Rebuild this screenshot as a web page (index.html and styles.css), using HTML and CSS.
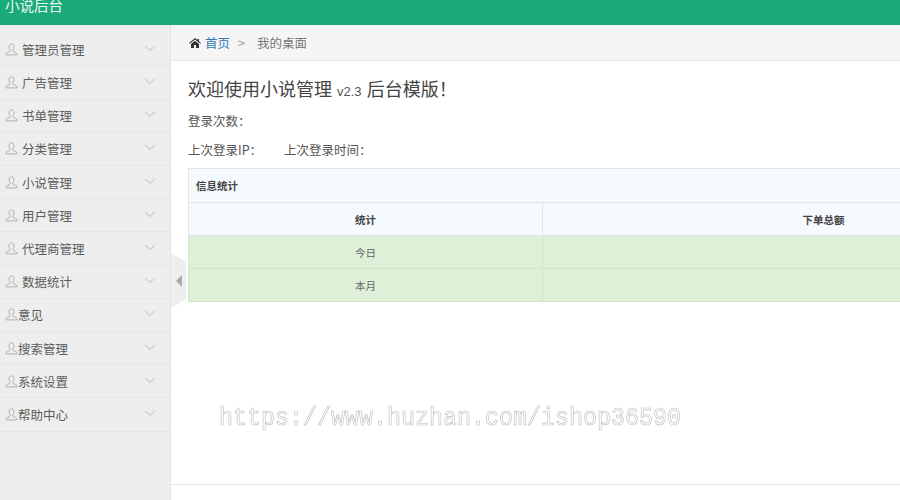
FILE: index.html
```html
<!DOCTYPE html>
<html lang="zh">
<head>
<meta charset="utf-8">
<title>小说后台</title>
<link rel="stylesheet" href="styles.css">
</head>
<body>
<svg class="defs" width="0" height="0">
  <symbol id="user" viewBox="0 0 13 13"><path d="M6.5 1C4.900 1 4 2.200 4 3.700c0 1.200.4 2.200 1 3 .3.400.3 1 .1 1.300-.3.500-1.300.9-2.300 1.300-1 .4-1.800.8-1.800 1.600v1h11v-1c0-.8-.8-1.200-1.800-1.600-1-.4-2-.8-2.300-1.300-.2-.3-.2-.9.100-1.300.6-.8 1-1.800 1-3C9 2.200 8.100 1 6.500 1z" fill="none" stroke="#b0b0b0" stroke-width="1"/></symbol>
  <symbol id="chev" viewBox="0 0 12 7"><path d="M1 1l5 4.500L11 1" fill="none" stroke="#cfcfcf" stroke-width="1.200"/></symbol>
</svg>
<header class="topbar"><span class="brand">小说后台</span></header>
<div class="layout">
  <nav class="sidebar">
    <ul class="menu">
      <li class="item"><span class="label"><svg class="ico"><use href="#user"/></svg><span class="gap">管理员管理</span></span><svg class="chev"><use href="#chev"/></svg></li>
      <li class="item"><span class="label"><svg class="ico"><use href="#user"/></svg><span class="gap">广告管理</span></span><svg class="chev"><use href="#chev"/></svg></li>
      <li class="item"><span class="label"><svg class="ico"><use href="#user"/></svg><span class="gap">书单管理</span></span><svg class="chev"><use href="#chev"/></svg></li>
      <li class="item"><span class="label"><svg class="ico"><use href="#user"/></svg><span class="gap">分类管理</span></span><svg class="chev"><use href="#chev"/></svg></li>
      <li class="item"><span class="label"><svg class="ico"><use href="#user"/></svg><span class="gap">小说管理</span></span><svg class="chev"><use href="#chev"/></svg></li>
      <li class="item"><span class="label"><svg class="ico"><use href="#user"/></svg><span class="gap">用户管理</span></span><svg class="chev"><use href="#chev"/></svg></li>
      <li class="item"><span class="label"><svg class="ico"><use href="#user"/></svg><span class="gap">代理商管理</span></span><svg class="chev"><use href="#chev"/></svg></li>
      <li class="item"><span class="label"><svg class="ico"><use href="#user"/></svg><span class="gap">数据统计</span></span><svg class="chev"><use href="#chev"/></svg></li>
      <li class="item"><span class="label"><svg class="ico"><use href="#user"/></svg><span>意见</span></span><svg class="chev"><use href="#chev"/></svg></li>
      <li class="item"><span class="label"><svg class="ico"><use href="#user"/></svg><span>搜索管理</span></span><svg class="chev"><use href="#chev"/></svg></li>
      <li class="item"><span class="label"><svg class="ico"><use href="#user"/></svg><span>系统设置</span></span><svg class="chev"><use href="#chev"/></svg></li>
      <li class="item"><span class="label"><svg class="ico"><use href="#user"/></svg><span>帮助中心</span></span><svg class="chev"><use href="#chev"/></svg></li>
    </ul>
  </nav>
  <div class="toggle"><span class="toggle-arrow"></span></div>
  <main class="main">
    <div class="crumbs">
      <svg class="home" viewBox="0 0 12 10"><path d="M6 0L0 5l.6.7L6 1.400l5.400 4.300.6-.7-2-1.700V1H8.600v1L6 0zM2 6v4h3V7h2v3h3V6L6 2.700 2 6z" fill="#333"/></svg>
      <a class="crumb-link">首页</a>
      <span class="crumb-sep">&gt;</span>
      <span class="crumb-here">我的桌面</span>
    </div>
    <div class="content">
      <h1 class="title">欢迎使用小说管理 <small class="ver">v2.3</small> 后台模版！</h1>
      <p class="line">登录次数：</p>
      <p class="line line-two"><span class="ip">上次登录IP：</span><span>上次登录时间：</span></p>
      <table class="stats">
        <colgroup><col class="col-a"><col class="col-b"></colgroup>
        <thead>
          <tr><th colspan="2" class="caption">信息统计</th></tr>
          <tr><th>统计</th><th>下单总额</th></tr>
        </thead>
        <tbody>
          <tr><td>今日</td><td></td></tr>
          <tr><td>本月</td><td></td></tr>
        </tbody>
      </table>
    </div>
    <div class="foot-line"></div>
  </main>
</div>
<div class="watermark">https://www.huzhan.com/ishop36590</div>
</body>
</html>
```
FILE: styles.css
```css
* { box-sizing: border-box; }
html, body { margin: 0; padding: 0; height: 100%; overflow: hidden; }
body { width: 900px; height: 500px; position: relative; background: #fff; color: #555; font-family: "Noto Sans CJK SC", "Liberation Sans", sans-serif; font-size: 12.5px; }
.defs { position: absolute; }
.topbar { height: 25px; background: #1aaa7a; overflow: hidden; padding-left: 5px; }
.brand { display: block; font-size: 14.5px; line-height: 14px; margin-top: -2px; color: #eaf7f2; }
.layout { display: flex; height: 475px; position: relative; }
.sidebar { width: 171px; flex: none; background: #eeeeee; border-right: 1px solid #e4e4e4; padding-top: 8.250px; }
.menu { list-style: none; margin: 0; padding: 0; }
.item { height: 33.2px; display: flex; align-items: center; justify-content: space-between; padding: 0 14px 0 5px; border-bottom: 1px solid #e6e6e6; color: #5c5c5c; }
.label { display: flex; align-items: center; }
.ico { width: 13px; height: 13px; flex: none; }
.gap { margin-left: 4px; }
.chev { width: 12px; height: 7px; margin-top: -2px; }
.toggle { position: absolute; left: 171px; top: 228px; width: 15px; height: 55px; background: #eeeeee; clip-path: polygon(0 0, 100% 16%, 100% 84%, 0 100%); display: flex; align-items: center; justify-content: center; }
.toggle-arrow { width: 0; height: 0; border-style: solid; border-width: 6.500px 6px 6.500px 0; border-color: transparent #aaa transparent transparent; }
.main { flex: 1; min-width: 0; overflow: hidden; display: flex; flex-direction: column; }
.crumbs { height: 36px; flex: none; background: #f5f5f5; border-bottom: 1px solid #e6e6e6; display: flex; align-items: center; padding-left: 18px; font-size: 12.500px; color: #777; }
.home { width: 12px; height: 10px; }
.crumb-link { color: #337ab7; margin-left: 4px; }
.crumb-sep { color: #999; margin: 0 12px 0 8px; }
.content { flex: 1; padding: 0 0 0 17px; }
.title { margin: 15px 0 0; font-size: 18px; font-weight: 400; line-height: 24px; color: #444; white-space: nowrap; }
.ver { font-size: 13px; color: #555; font-family: "Liberation Sans", sans-serif; margin: 0 1px; }
.line { margin: 8px 0 0; line-height: 18px; color: #555; white-space: nowrap; }
.line-two { margin-top: 11px; }
.ip { margin-right: 22px; }
.stats { width: 916px; margin-top: 9px; border-collapse: collapse; table-layout: fixed; font-size: 10.500px; }
.col-a { width: 354px; }
.col-b { width: 562px; }
.stats th, .stats td { height: 33px; padding: 0; border: 1px solid #e3e6e8; text-align: center; }
.stats th.caption { height: 34px; text-align: left; padding-left: 7px; }
.stats th { background: #f5faff; font-weight: 700; color: #444; }
.stats td { background: #dff0d8; color: #666; border-color: #d4e4ce; }
.foot-line { height: 16px; flex: none; border-top: 1px solid #e8e8e8; }
.watermark { position: absolute; left: 219px; top: 403px; font-family: "Liberation Mono", monospace; font-size: 23.330px; line-height: 30px; color: #fff; -webkit-text-stroke: 0.600px #bdbdbd; white-space: nowrap; transform: scaleY(1.1); transform-origin: left center; will-change: transform; }
```
